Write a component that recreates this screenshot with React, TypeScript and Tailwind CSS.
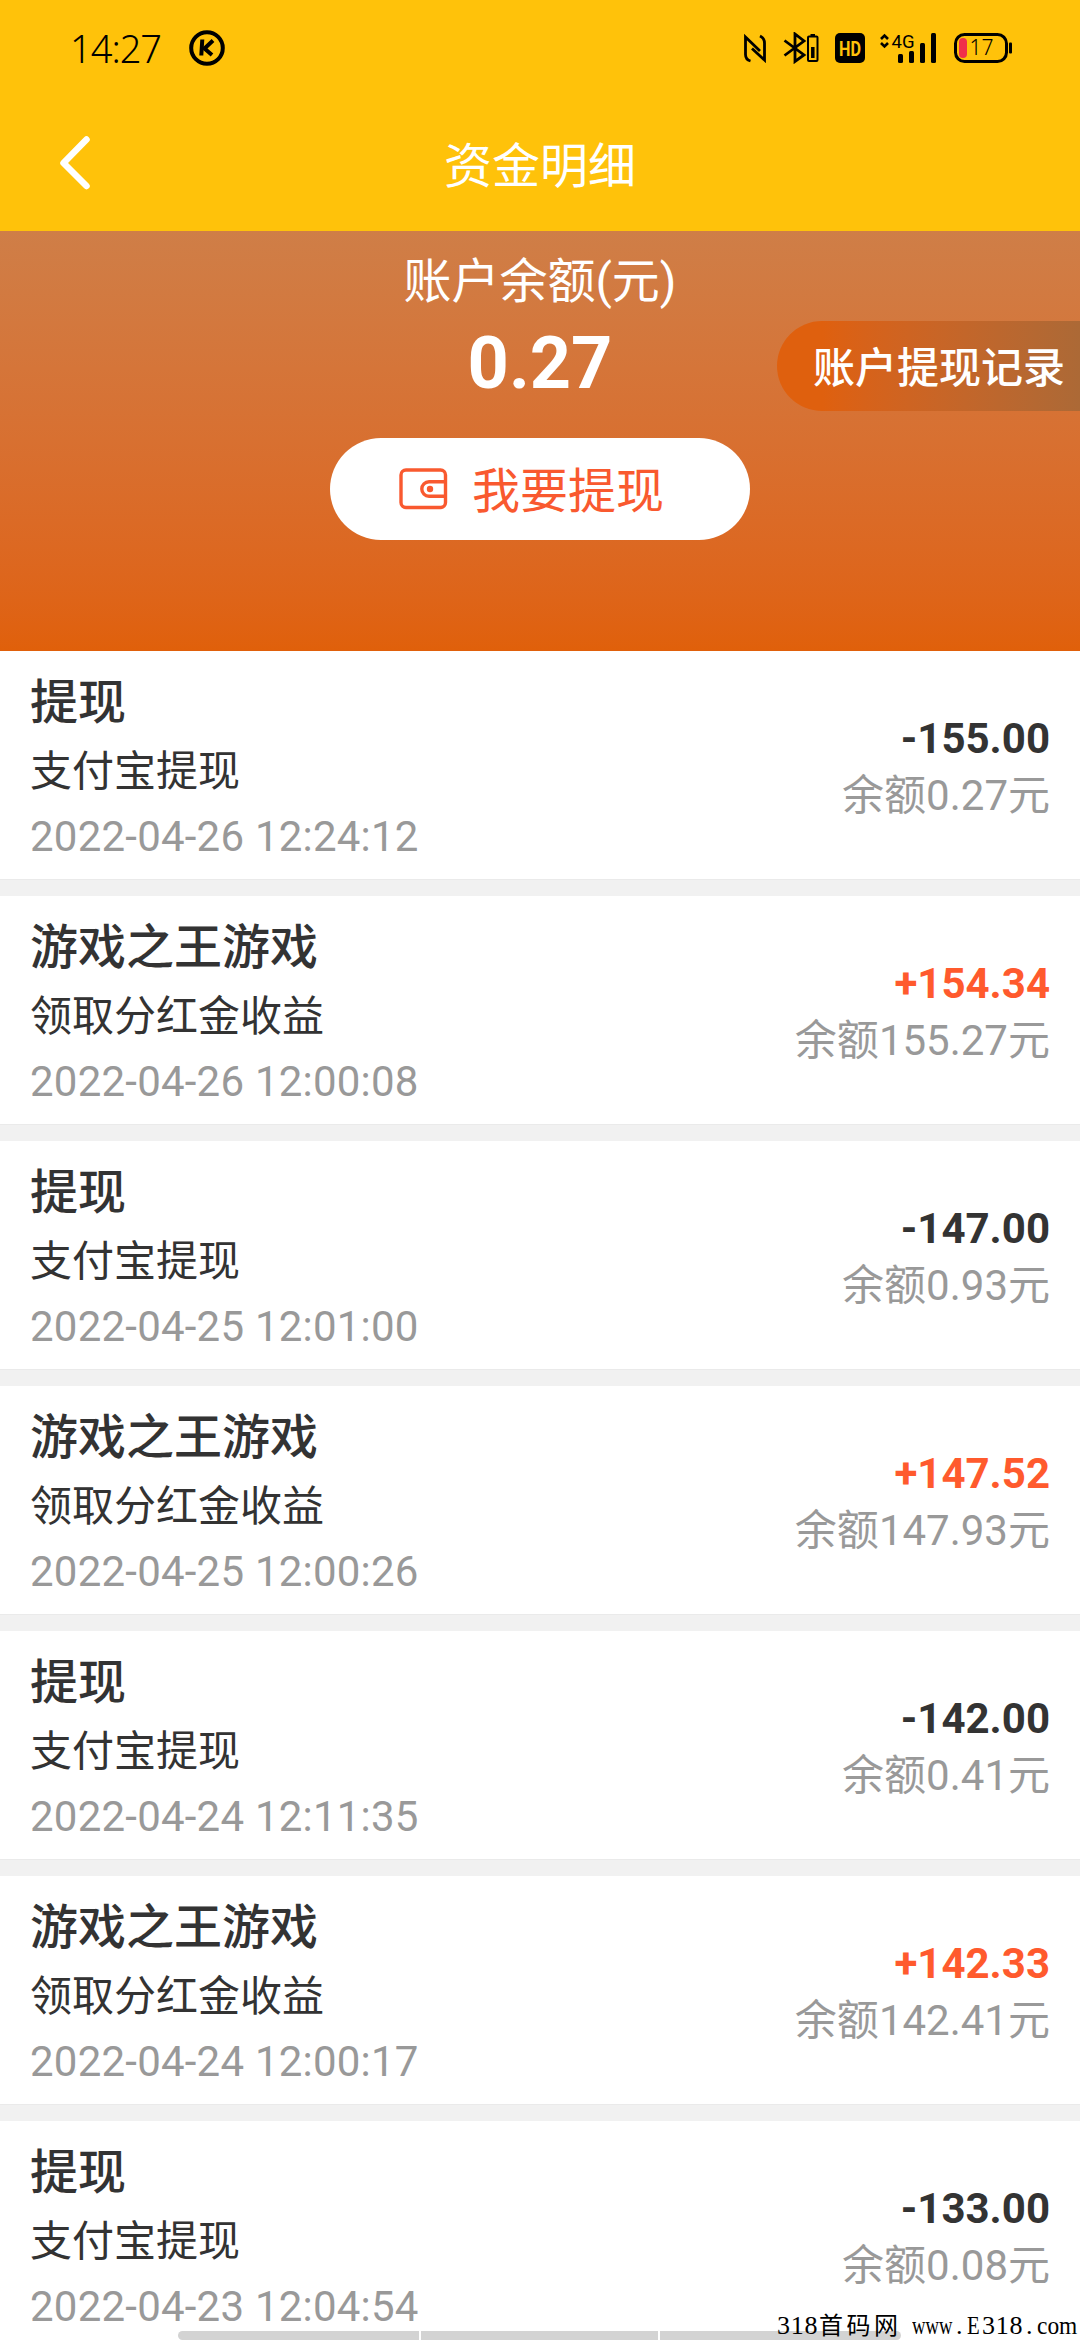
import React from 'react';

interface FundRecord {
  title: string;
  note: string;
  time: string;
  amount: string;
  balance: string;
}

const records: FundRecord[] = [
  { title: '提现', note: '支付宝提现', time: '2022-04-26 12:24:12', amount: '-155.00', balance: '0.27' },
  { title: '游戏之王游戏', note: '领取分红金收益', time: '2022-04-26 12:00:08', amount: '+154.34', balance: '155.27' },
  { title: '提现', note: '支付宝提现', time: '2022-04-25 12:01:00', amount: '-147.00', balance: '0.93' },
  { title: '游戏之王游戏', note: '领取分红金收益', time: '2022-04-25 12:00:26', amount: '+147.52', balance: '147.93' },
  { title: '提现', note: '支付宝提现', time: '2022-04-24 12:11:35', amount: '-142.00', balance: '0.41' },
  { title: '游戏之王游戏', note: '领取分红金收益', time: '2022-04-24 12:00:17', amount: '+142.33', balance: '142.41' },
  { title: '提现', note: '支付宝提现', time: '2022-04-23 12:04:54', amount: '-133.00', balance: '0.08' }
];

function StatusBar() {
  return (
    <div className="flex h-[96px] items-center pl-[70px] pr-[67px] text-black">
      <span className="w-[119px] font-['Noto_Sans'] text-[38px] leading-[40px] font-[350] tracking-[-1px]">14:27</span>
      <svg className="h-9 w-9" viewBox="0 0 36 36" fill="none" stroke="currentColor">
        <circle cx="18" cy="18" r="15.800" strokeWidth="4" />
        <path d="M13.300 9.500L12.300 25.500" strokeWidth="4" />
        <path d="M24 10.500L15.500 18.500L23 25" strokeWidth="4" strokeLinejoin="round" />
      </svg>

      <div className="ml-auto flex items-center">
        {/* NFC */}
        <svg className="h-[30px] w-6" viewBox="0 0 24 30" fill="none" stroke="currentColor" strokeWidth="2.800">
          <path d="M7.500 28C4 27 2.500 25 2.500 21.500V4L17 18" />
          <path d="M17 3C20 4.500 21.500 6.500 21.500 10V27L9 15.500" />
        </svg>

        {/* Bluetooth with device battery */}
        <svg className="ml-4 h-[32px] w-9" viewBox="0 0 36 32" fill="none" stroke="currentColor">
          <path d="M1.500 8.500L21 23L12 29.500V2L21 9L1.500 23.500" strokeWidth="2.800" />
          <rect x="25" y="4.500" width="9.500" height="24.500" rx="1" strokeWidth="2" />
          <path d="M27.500 3H32" strokeWidth="2" />
          <path d="M29.800 15V26" strokeWidth="3.500" />
        </svg>

        {/* HD voice */}
        <svg className="ml-4 h-[30px] w-[30px] overflow-visible" viewBox="0 0 30 30">
          <rect width="30" height="30" rx="5" />
          <text x="4" y="22.500" fill="#ffc20a" fontFamily="Roboto" fontSize="21" fontWeight="700" textLength="22" lengthAdjust="spacingAndGlyphs">HD</text>
        </svg>

        {/* Mobile signal */}
        <svg className="ml-[14px] h-[30px] w-[58px] overflow-visible" viewBox="0 0 58 30" fill="currentColor">
          <path d="M2 6L5.500 2.500L9 6M2 10L5.500 13.500L9 10" fill="none" stroke="currentColor" strokeWidth="2.600" />
          <text x="12.500" y="14.500" fontFamily="Roboto" fontSize="19" textLength="23" lengthAdjust="spacingAndGlyphs">4G</text>
          <rect x="19" y="21" width="5" height="9" rx="1.500" />
          <rect x="30" y="18" width="5" height="12" rx="1.500" />
          <rect x="41" y="10" width="5" height="20" rx="1.500" />
          <rect x="52" y="0" width="5" height="30" rx="1.500" />
        </svg>

        {/* Phone battery */}
        <svg className="ml-4 h-[30px] w-[60px] overflow-visible" viewBox="0 0 60 30">
          <rect x="2.500" y="1.500" width="51" height="27" rx="9" fill="none" stroke="black" strokeWidth="3" />
          <rect x="6" y="5" width="8" height="20" rx="4" fill="#f0304a" />
          <text x="16.500" y="22" fontFamily="Noto Sans" fontSize="21" fontWeight="300">17</text>
          <rect x="56" y="9.500" width="3" height="11" rx="1" />
        </svg>
      </div>
    </div>
  );
}

function WalletIcon() {
  return (
    <svg className="h-[42px] w-[49px]" viewBox="0 0 49 42" fill="none" stroke="currentColor" strokeWidth="3.400">
      <rect x="2" y="2" width="44.500" height="37.500" rx="5" />
      <path d="M46.500 13.800H30A7.200 7.200 0 0 0 30 28.200H46.500" />
      <circle cx="31" cy="21" r="3.200" fill="currentColor" stroke="none" />
    </svg>
  );
}

function RecordItem({ record }: { record: FundRecord }) {
  const isIncome = record.amount.startsWith('+');

  return (
    <div className="flex h-[245px] shrink-0 items-start justify-between border-b-16 border-[#f1f1f1] bg-white px-[30px] shadow-[inset_0_-1px_0_#eaeaea]">
      <div className="pt-[17px]">
        <div className="text-[48px] leading-[70px] font-medium text-[#333]">{record.title}</div>
        <div className="pt-px text-[42px] leading-[66px] text-[#333]">{record.note}</div>
        <div className="text-[42px] leading-[64px] tracking-[0.22px] text-[#999]">{record.time}</div>
      </div>
      <div className="pt-[59px] text-right text-[42px] leading-[57px]">
        <div className={`font-bold ${isIncome ? 'text-[#ff5a2d]' : 'text-[#333]'}`}>{record.amount}</div>
        <div className="text-[#999]">余额{record.balance}元</div>
      </div>
    </div>
  );
}

export default function App() {
  return (
    <div className="relative flex h-[2340px] w-[1080px] flex-col overflow-hidden bg-white font-['Roboto','Noto_Sans_CJK_SC',sans-serif]">
      <header className="h-[231px] shrink-0 bg-[#ffc20a]">
        <StatusBar />
        <div className="grid h-[135px] grid-cols-[120px_1fr_120px] items-start text-white">
          <svg className="mt-[38px] ml-[56px] h-[58px] w-[38px]" viewBox="0 0 38 58" fill="none" stroke="currentColor" strokeWidth="6.500" strokeLinecap="round" strokeLinejoin="round">
            <path d="M30.500 5.500L7.500 29L30.500 52" />
          </svg>
          <h1 className="pt-[36px] text-center text-[48px] leading-[70px] font-normal">资金明细</h1>
        </div>
      </header>

      {/* Balance panel */}
      <section className="relative flex h-[420px] shrink-0 flex-col items-center bg-linear-to-b from-[#cf7e47] to-[#e0600a] pt-[16px] text-white">
        <div className="text-[48px] leading-[70px]">账户余额(元)</div>
        <div className="pt-[3px] text-[72px] leading-[88px] font-bold">0.27</div>
        <button className="mt-[30px] flex h-[102px] w-[420px] items-center rounded-full bg-white pl-[69px] text-[#f9592f]">
          <WalletIcon />
          <span className="ml-[24px] pt-[5px] text-[48px] leading-[70px]">我要提现</span>
        </button>
        <button className="absolute top-[90px] right-0 flex h-[90px] w-[303px] items-center rounded-l-full bg-linear-to-r from-[#df600e] from-15% to-[#ac6936] pt-[5px] pl-[36px] text-[42px] leading-[60px] font-medium">
          账户提现记录
        </button>
      </section>

      <main className="flex flex-col">
        {records.map((record) => (
          <RecordItem key={record.time} record={record} />
        ))}
      </main>

      {/* Gesture hints */}
      <div className="absolute bottom-0 left-[178px] flex h-[9px] w-[723px] gap-[2px] overflow-hidden rounded-full">
        <div className="w-[241px] bg-[#d3d3d3]" />
        <div className="w-[237px] bg-[#d3d3d3]" />
        <div className="flex-1 bg-[#d3d3d3]" />
      </div>

      {/* Site mark */}
      <div className="absolute right-0 bottom-0 flex h-7 w-[303px] items-center font-['Liberation_Serif','Noto_Sans_CJK_SC',serif] text-[26px] leading-7 whitespace-nowrap text-black">
        <span className="w-[41px] tracking-[0.7px]">318</span>
        <span className="w-[94px] pl-px text-[24px] tracking-[3.5px]">首码网</span>
        <span className="w-[41px]"><span className="inline-block origin-left scale-x-72">www</span></span>
        <span className="w-[14px] pl-[3px]">.</span>
        <span className="w-[15px]"><span className="inline-block origin-left scale-x-80">E</span></span>
        <span className="w-[41px] tracking-[0.7px]">318</span>
        <span className="w-[14px] pl-[3px]">.</span>
        <span className="w-[41px]"><span className="inline-block origin-left scale-x-90">com</span></span>
      </div>
    </div>
  );
}
